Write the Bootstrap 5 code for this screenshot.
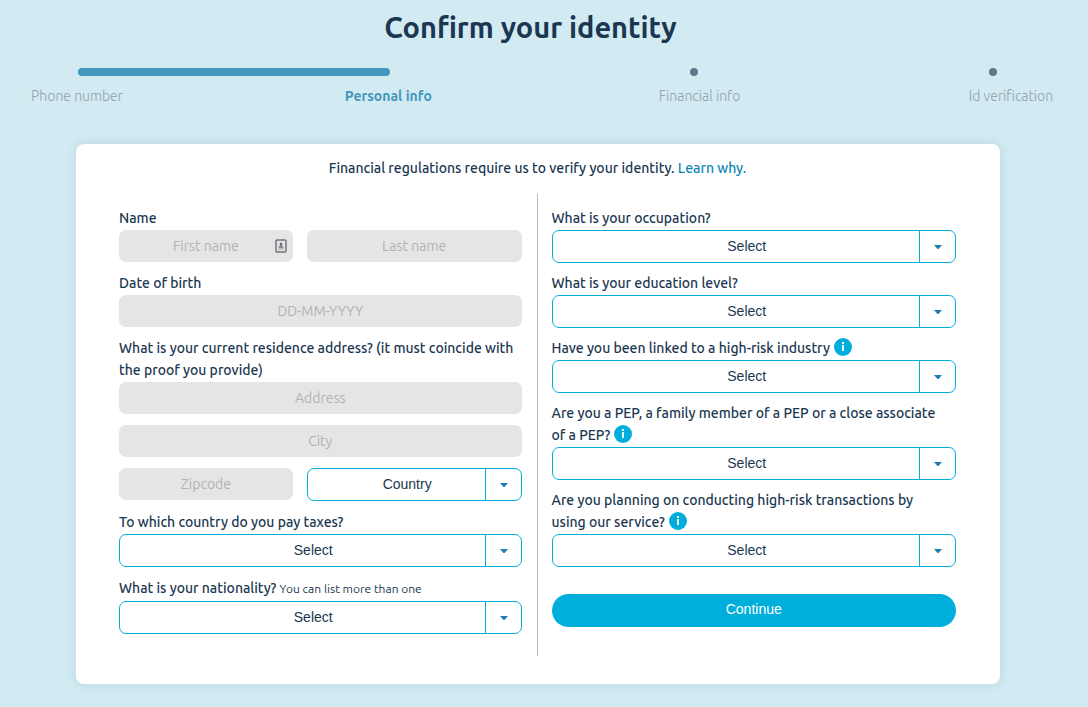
<!DOCTYPE html>
<html lang="en">
<head>
<meta charset="utf-8">
<meta name="viewport" content="width=device-width, initial-scale=1">
<title>Confirm your identity</title>
<link href="https://cdn.jsdelivr.net/npm/bootstrap@5.3.0/dist/css/bootstrap.min.css" rel="stylesheet">
<style>
:root { --ink: #1a3751; --accent: #00aedc; --step: #4396bd; }
body { background: #d2eaf1; color: var(--ink); font-family: Ubuntu, "Noto Sans", sans-serif; font-size: 14px; font-weight: 500; line-height: 22px; }
.page-title { font-size: 29px; line-height: 36px; font-weight: 700; padding: 9px 27px 0 0; }
.step-track { padding: 0 91px 0 78px; height: 8px; margin-top: 23px; }
.step-bar { width: 34%; height: 8px; border-radius: 4px; background: var(--step); }
.step-gap { width: 33.5%; text-align: right; line-height: 0; }
.step-gap:last-child { width: 32.5%; }
.step-dot { display: inline-block; width: 8px; height: 8px; border-radius: 50%; background: #64748c; }
.step-names { padding: 0 30px; margin-top: 9px; }
.step-names li { width: 94px; text-align: center; white-space: nowrap; font-weight: 300; color: #8f9fae; }
.step-names li.current { font-weight: 700; color: var(--step); }
.form-wrap { padding: 37px 88px 23px 76px; }
.panel { background: #fff; border-radius: 8px; padding: 13px 44px 28px 43px; box-shadow: 0 0 10px rgba(40, 110, 130, .15); }
.panel a { color: #0c87b8; }
.intro { margin-bottom: 15px; }
.col-left { padding: 14px 15px 22px 0; border-right: 1px solid #bbb; gap: 11px; }
.col-right { padding: 14px 0 22px 14px; gap: 10px; }
.caption-line { display: block; margin: -1px 0 1px; }
.col-right .caption-line { padding-right: 12px; }
.hint { font-size: 12px; font-weight: 400; }
.field { display: block; width: 100%; height: 32px; border: 0; border-radius: 7px; background: #e5e5e5; text-align: center; color: var(--ink); font-weight: 400; padding: 0 8px; }
.field::placeholder { color: #b0b2b3; opacity: 1; }
.pair { gap: 14px; }
.pair > .narrow { flex: 174 1 0; min-width: 0; }
.pair > .wide { flex: 215 1 0; min-width: 0; }
.contact-icon { position: absolute; right: 6px; top: 9px; }
.pick { display: block; width: 100%; height: 33px; border: 1px solid var(--accent); border-radius: 7px; color: var(--ink);
  font-family: "Liberation Sans", Arial, sans-serif; font-size: 14px; font-weight: 400; text-align: center; text-align-last: center; padding: 0 35px 2px 21px; appearance: none;
  background: url("data:image/svg+xml,%3Csvg xmlns='http://www.w3.org/2000/svg' width='8' height='4'%3E%3Cpath d='M0 0h8L4.500 4h-1z' fill='%231c7db5'/%3E%3C/svg%3E") no-repeat right 13px top 14px,
  linear-gradient(var(--accent), var(--accent)) no-repeat right 35px top / 1px 100%, #fff; }
.info { width: 18px; height: 18px; border: 0; padding: 0; margin: -4px 0 -4px 1px; border-radius: 50%; background: var(--accent); display: inline-flex; align-items: center; justify-content: center; vertical-align: 1px; }
.btn-go { width: 100%; height: 33px; border-radius: 17px; background: var(--accent); color: #fff; border: 0; padding: 0 0 2px; font-family: "Liberation Sans", Arial, sans-serif; font-size: 14px; margin-top: 17px; }
.btn-go:hover { background: #009cc6; color: #fff; }
@media (max-width: 767px) { .form-wrap { padding: 24px 12px; } .panel { padding: 13px 16px; } .col-left, .col-right { padding: 14px 0; border: 0; } .step-names { padding: 0 8px; } }
</style>
</head>
<body>
<header>
  <h1 class="page-title text-center mb-0">Confirm your identity</h1>
  <div class="step-track d-flex" aria-hidden="true">
    <div class="step-bar"></div>
    <div class="step-gap"><span class="step-dot"></span></div>
    <div class="step-gap"><span class="step-dot"></span></div>
  </div>
  <ol class="step-names list-unstyled d-flex justify-content-between mb-0">
    <li>Phone number</li>
    <li class="current" aria-current="step">Personal info</li>
    <li>Financial info</li>
    <li>Id verification</li>
  </ol>
</header>
<main class="form-wrap">
  <form class="panel">
    <p class="intro text-center">Financial regulations require us to verify your identity. <a href="#" class="text-decoration-none">Learn why.</a></p>
    <div class="row g-0">
      <div class="col-12 col-md-6 col-left d-flex flex-column">
        <div>
          <label class="caption-line" for="first">Name</label>
          <div class="pair d-flex">
            <div class="narrow position-relative">
              <input class="field" id="first" type="text" placeholder="First name">
              <svg class="contact-icon" width="12" height="14" viewBox="0 0 12 14" aria-hidden="true"><rect x="1" y="1" width="10" height="12" rx="1" fill="#e0e4e6" stroke="#75737a" stroke-width="1.500"/><circle cx="6" cy="5" r="1.300" fill="#666"/><path d="M4 8.500q0-2 2-2t2 2zM3.500 10h5" fill="#777" stroke="#888" stroke-width=".8"/></svg>
            </div>
            <div class="wide"><input class="field" type="text" placeholder="Last name" aria-label="Last name"></div>
          </div>
        </div>
        <div>
          <label class="caption-line" for="dob">Date of birth</label>
          <input class="field" id="dob" type="text" placeholder="DD-MM-YYYY">
        </div>
        <div>
          <label class="caption-line" for="address">What is your current residence address? (it must coincide with the proof you provide)</label>
          <input class="field" id="address" type="text" placeholder="Address">
        </div>
        <input class="field" type="text" placeholder="City" aria-label="City">
        <div class="pair d-flex">
          <div class="narrow"><input class="field" type="text" placeholder="Zipcode" aria-label="Zipcode"></div>
          <div class="wide"><select class="pick" aria-label="Country"><option>Country</option></select></div>
        </div>
        <div>
          <label class="caption-line" for="tax">To which country do you pay taxes?</label>
          <select class="pick" id="tax"><option>Select</option></select>
        </div>
        <div>
          <label class="caption-line" for="nation">What is your nationality? <span class="hint">You can list more than one</span></label>
          <select class="pick" id="nation"><option>Select</option></select>
        </div>
      </div>
      <div class="col-12 col-md-6 col-right d-flex flex-column">
        <div>
          <label class="caption-line" for="job">What is your occupation?</label>
          <select class="pick" id="job"><option>Select</option></select>
        </div>
        <div>
          <label class="caption-line" for="edu">What is your education level?</label>
          <select class="pick" id="edu"><option>Select</option></select>
        </div>
        <div>
          <div class="caption-line"><label class="d-inline" for="industry">Have you been linked to a high-risk industry</label>
            <button type="button" class="info" aria-label="About high-risk industries"><svg width="4" height="10" viewBox="0 0 4 10" fill="#fff"><rect x="1" y="0" width="2" height="2"/><rect x="1" y="3" width="2" height="6" opacity=".9"/></svg></button></div>
          <select class="pick" id="industry"><option>Select</option></select>
        </div>
        <div>
          <div class="caption-line"><label class="d-inline" for="pep">Are you a PEP, a family member of a PEP or a close associate of a PEP?</label>
            <button type="button" class="info" aria-label="About PEPs"><svg width="4" height="10" viewBox="0 0 4 10" fill="#fff"><rect x="1" y="0" width="2" height="2"/><rect x="1" y="3" width="2" height="6" opacity=".9"/></svg></button></div>
          <select class="pick" id="pep"><option>Select</option></select>
        </div>
        <div>
          <div class="caption-line"><label class="d-inline" for="risk">Are you planning on conducting high-risk transactions by using our service?</label>
            <button type="button" class="info" aria-label="About high-risk transactions"><svg width="4" height="10" viewBox="0 0 4 10" fill="#fff"><rect x="1" y="0" width="2" height="2"/><rect x="1" y="3" width="2" height="6" opacity=".9"/></svg></button></div>
          <select class="pick" id="risk"><option>Select</option></select>
        </div>
        <button type="submit" class="btn btn-go">Continue</button>
      </div>
    </div>
  </form>
</main>
<script src="https://cdn.jsdelivr.net/npm/bootstrap@5.3.0/dist/js/bootstrap.bundle.min.js"></script>
</body>
</html>
